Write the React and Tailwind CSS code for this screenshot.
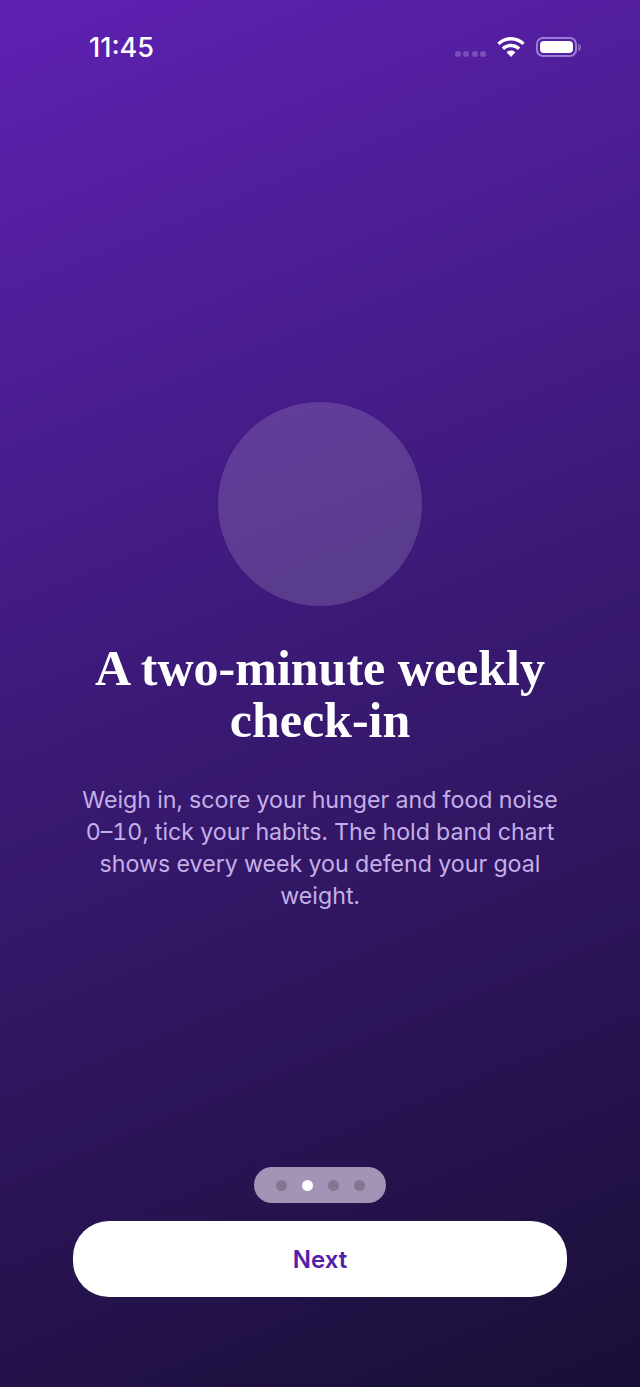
export default function App() {
  return (
    <div className="w-[640px] h-[1387px] flex flex-col overflow-hidden bg-[linear-gradient(158deg,#5e21b3_0%,#3c1a78_45%,#190f36_100%)] font-['Inter',sans-serif]">
      <div className="h-[94px] shrink-0 flex items-start justify-between pl-[89px] pr-[59px] pt-[33px]">
        <span className="text-[27px] leading-[30px] font-medium text-white">11:45</span>
        <div className="flex items-start mt-[4px]">
          <div className="flex gap-[2.500px] mt-[14px] mr-[11px]">
            <span className="w-[6px] h-[6px] rounded-full bg-[#7a50b8]" />
            <span className="w-[6px] h-[6px] rounded-full bg-[#7a50b8]" />
            <span className="w-[6px] h-[6px] rounded-full bg-[#7a50b8]" />
            <span className="w-[6px] h-[6px] rounded-full bg-[#7a50b8]" />
          </div>
          <svg width="28" height="20" viewBox="2 0.500 24 17.500" fill="white" className="mr-[11px]">
            <path d="M14 3.6c3.9 0 7.4 1.500 10 4l2-2.100C22.800 2.400 18.600 0.500 14 0.500S5.200 2.400 2 5.500l2 2.100c2.600-2.500 6.100-4 10-4z" />
            <path d="M14 9.400c2.300 0 4.400 0.900 6 2.400l2.100-2.100C20 7.600 17.100 6.300 14 6.300s-6 1.300-8.100 3.400l2.100 2.100c1.600-1.500 3.700-2.400 6-2.400z" />
            <path d="M14 12.300c-1.500 0-2.900 0.600-3.900 1.600L14 18l3.900-4.100c-1-1-2.400-1.600-3.900-1.600z" />
          </svg>
          <div className="flex items-center">
            <div className="w-[41px] h-[20px] rounded-[7px] border-2 border-[#9a7dd6] p-[2px]">
              <div className="w-full h-full rounded-[4px] bg-white" />
            </div>
            <div className="w-[3px] h-[7px] ml-[1px] rounded-r-full bg-[#7f5cc4]" />
          </div>
        </div>
      </div>
      <main className="flex flex-col items-center pt-[308px] px-[40px] flex-1">
        <div className="w-[204px] h-[204px] rounded-full bg-white/15" />
        <h1 className="mt-[36px] w-[500px] text-center font-['Liberation_Serif',serif] font-bold text-[50px] leading-[52px] text-white">
          A two-minute weekly check-in
        </h1>
        <p className="mt-[38px] w-[496px] text-center text-[23.2px] leading-[32px] tabular-nums text-[#c4afe8]">
          Weigh in, score your hunger and food noise 0–10, tick your habits. The hold band chart shows every week you defend your goal weight.
        </p>
      </main>
      <div className="flex flex-col items-center pb-[90px]">
        <div className="w-[132px] h-[36px] rounded-full bg-[#a393b6] flex items-center justify-center gap-[15px]">
          <span className="w-[11px] h-[11px] rounded-full bg-[#84768f]" />
          <span className="w-[11px] h-[11px] rounded-full bg-white" />
          <span className="w-[11px] h-[11px] rounded-full bg-[#84768f]" />
          <span className="w-[11px] h-[11px] rounded-full bg-[#84768f]" />
        </div>
        <button className="mt-[18px] w-[494px] h-[76px] rounded-[36px] bg-white text-[#5220a8] text-[24px] font-semibold pt-[2px]">
          Next
        </button>
      </div>
    </div>
  );
}
